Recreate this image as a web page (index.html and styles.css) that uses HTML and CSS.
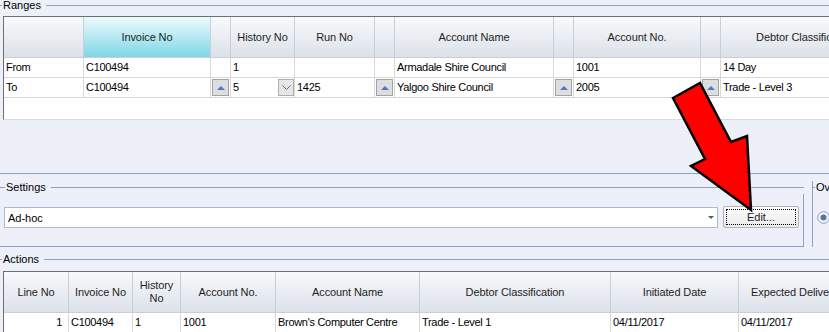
FILE: index.html
```html
<!DOCTYPE html>
<html lang="en">
<head>
  <meta charset="UTF-8">
  <title>Invoice Actions</title>
  <link rel="stylesheet" href="styles.css">
</head>
<body>
  <div class="legend top"><span class="tick"></span><span class="legend-text">Ranges</span><span class="legend-line"></span></div>

  <div class="grid ranges">
    <div class="row head">
      <div class="cell"></div>
      <div class="cell sel">Invoice No</div>
      <div class="cell"></div>
      <div class="cell">History No</div>
      <div class="cell">Run No</div>
      <div class="cell"></div>
      <div class="cell">Account Name</div>
      <div class="cell"></div>
      <div class="cell">Account No.</div>
      <div class="cell"></div>
      <div class="cell">Debtor Classification</div>
    </div>
    <div class="row">
      <div class="cell">From</div>
      <div class="cell">C100494</div>
      <div class="cell"></div>
      <div class="cell">1</div>
      <div class="cell"></div>
      <div class="cell"></div>
      <div class="cell">Armadale Shire Council</div>
      <div class="cell"></div>
      <div class="cell">1001</div>
      <div class="cell"></div>
      <div class="cell">14 Day</div>
    </div>
    <div class="row">
      <div class="cell">To</div>
      <div class="cell">C100494</div>
      <div class="cell spin"><span class="spin-btn"></span></div>
      <div class="cell drop">5
        <span class="drop-btn">
          <svg width="9" height="5" viewBox="0 0 9 5"><polyline points="0.5,0.5 4.5,4.5 8.5,0.5" fill="none" stroke="#6f6f6f" stroke-width="1"/></svg>
        </span>
      </div>
      <div class="cell">1425</div>
      <div class="cell spin"><span class="spin-btn"></span></div>
      <div class="cell">Yalgoo Shire Council</div>
      <div class="cell spin"><span class="spin-btn"></span></div>
      <div class="cell">2005</div>
      <div class="cell spin"><span class="spin-btn"></span></div>
      <div class="cell">Trade - Level 3</div>
    </div>
  </div>

  <div class="splitter"></div>

  <div class="settings-row">
    <div class="settings">
      <div class="legend"><span class="tick wide"></span><span class="legend-text">Settings</span><span class="legend-line"></span></div>
      <div class="settings-body">
        <div class="combo">
          <span>Ad-hoc</span>
          <span class="combo-arrow"></span>
        </div>
        <button class="edit-btn"><span class="focus">Edit...</span></button>
      </div>
    </div>
    <div class="other">
      <div class="legend"><span class="tick"></span><span class="legend-text">Ov</span><span class="legend-line"></span></div>
      <div class="other-body">
        <svg width="13" height="13" viewBox="0 0 13 13">
          <circle cx="6.5" cy="6.5" r="5.8" fill="#f3f5f9" stroke="#8b9cb6" stroke-width="1"/>
          <circle cx="6.5" cy="6.5" r="3" fill="#5574a6"/>
        </svg>
      </div>
    </div>
  </div>

  <div class="legend actions-legend"><span class="tick"></span><span class="legend-text">Actions</span><span class="legend-line"></span></div>

  <div class="grid actions">
    <div class="row head">
      <div class="cell">Line No</div>
      <div class="cell">Invoice No</div>
      <div class="cell">History<br>No</div>
      <div class="cell">Account No.</div>
      <div class="cell">Account Name</div>
      <div class="cell">Debtor Classification</div>
      <div class="cell">Initiated Date</div>
      <div class="cell">Expected Delivery</div>
    </div>
    <div class="row">
      <div class="cell num">1</div>
      <div class="cell">C100494</div>
      <div class="cell">1</div>
      <div class="cell">1001</div>
      <div class="cell">Brown's Computer Centre</div>
      <div class="cell">Trade - Level 1</div>
      <div class="cell">04/11/2017</div>
      <div class="cell">04/11/2017</div>
    </div>
  </div>

  <svg class="pointer" width="829" height="332" viewBox="0 0 829 332">
    <polygon points="673,98 700,83 731,142 747,136 751,210 691,166 705,159" fill="#ff0000" stroke="#000" stroke-width="2.5" stroke-linejoin="miter"/>
  </svg>
</body>
</html>
```

FILE: styles.css
```css
* {
  box-sizing: border-box;
}
body {
  margin: 0;
  width: 829px;
  height: 332px;
  overflow: hidden;
  position: relative;
  background: #edf0f8;
  font-family: "Liberation Sans", Arial, sans-serif;
  font-size: 11px;
  color: #000;
}

/* group titles */
.legend {
  display: flex;
  align-items: center;
  height: 13px;
}
.legend.top {
  height: 11px;
}
.tick {
  width: 2px;
  height: 1px;
  background: #8da2c0;
}
.tick.wide {
  width: 5px;
}
.legend-text {
  padding: 0 5px 0 1px;
  line-height: 13px;
  white-space: nowrap;
}
.legend-line {
  flex: 1;
  height: 1px;
  background: #8da2c0;
}

/* data grids */
.grid {
  margin: 5px 0 0 3px;
  border-top: 1px solid #6e6e6e;
  border-left: 1px solid #6e6e6e;
  background: #fff;
  overflow: hidden;
}
.ranges {
  height: 104px;
  border-bottom: 1px solid #d9dce3;
}
.row {
  display: grid;
}
.ranges .row {
  grid-template-columns: 80px 127px 20px 64px 80px 20px 159px 20px 127px 20px 170px;
}
.actions .row {
  grid-template-columns: 65px 64px 48px 95px 144px 191px 128px 112px;
}
.cell {
  height: 20px;
  line-height: 19px;
  padding: 0 2px;
  letter-spacing: -0.3px;
  border-right: 1px solid #d8d8d8;
  border-bottom: 1px solid #d8d8d8;
  white-space: nowrap;
  overflow: hidden;
}
.head .cell {
  height: 41px;
  line-height: 13px;
  letter-spacing: -0.1px;
  display: flex;
  align-items: center;
  justify-content: center;
  text-align: center;
  color: #1e1e1e;
  background: linear-gradient(#f8f9fb, #dce1ea);
  border-right: 1px solid #c9cfd9;
  border-bottom: 1px solid #c9cfd9;
}
.head .cell.sel {
  background: linear-gradient(#eefafc, #7ed7e7);
}
.cell.num {
  text-align: right;
  padding-right: 6px;
}
.cell.spin {
  padding: 1px 0 0 1px;
}
.spin-btn {
  display: flex;
  align-items: center;
  justify-content: center;
  width: 17px;
  height: 17px;
  background: #dedede;
  border: 1px solid #a3a3a3;
}
.spin-btn::after {
  content: "";
  border-left: 4px solid transparent;
  border-right: 4px solid transparent;
  border-bottom: 4px solid #4c7ac0;
}
.cell.drop {
  display: flex;
  justify-content: space-between;
  padding-right: 0;
}
.drop-btn {
  display: flex;
  align-items: center;
  justify-content: center;
  width: 16px;
  height: 17px;
  margin-top: 1px;
  background: #e6e6e6;
  border: 1px solid #adadad;
}

.splitter {
  height: 1px;
  margin-top: 53px;
  background: #8da2c0;
}

/* settings */
.settings-row {
  display: flex;
  margin-top: 7px;
}
.settings {
  width: 804px;
}
.settings-body {
  display: flex;
  align-items: flex-start;
  gap: 5px;
  padding: 13px 4px 18px 4px;
  border-right: 1px solid #8da2c0;
  border-bottom: 1px solid #8da2c0;
}
.combo {
  display: flex;
  align-items: center;
  justify-content: space-between;
  width: 714px;
  height: 21px;
  padding: 0 3px 0 3px;
  background: #fff;
  border: 1px solid #abbad2;
}
.combo-arrow {
  border-left: 3px solid transparent;
  border-right: 3px solid transparent;
  border-top: 3px solid #5a5a5a;
}
.edit-btn {
  width: 76px;
  height: 22px;
  margin-top: -1px;
  padding: 2px;
  font: inherit;
  color: #1b1b2e;
  background: linear-gradient(#fdfdfd, #ebebeb);
  border: 1px solid #b2b2b2;
  border-radius: 2px;
}
.focus {
  display: block;
  height: 16px;
  line-height: 14px;
  border: 1px dotted #000;
}
.other {
  flex: 1;
  margin-left: 8px;
}
.other .legend,
.other-body {
  border-left: 1px solid #8da2c0;
}
.other-body {
  height: 53px;
  padding: 17px 0 0 4px;
}

.actions-legend {
  margin-top: 6px;
}

.pointer {
  position: absolute;
  left: 0;
  top: 0;
  pointer-events: none;
}
```
